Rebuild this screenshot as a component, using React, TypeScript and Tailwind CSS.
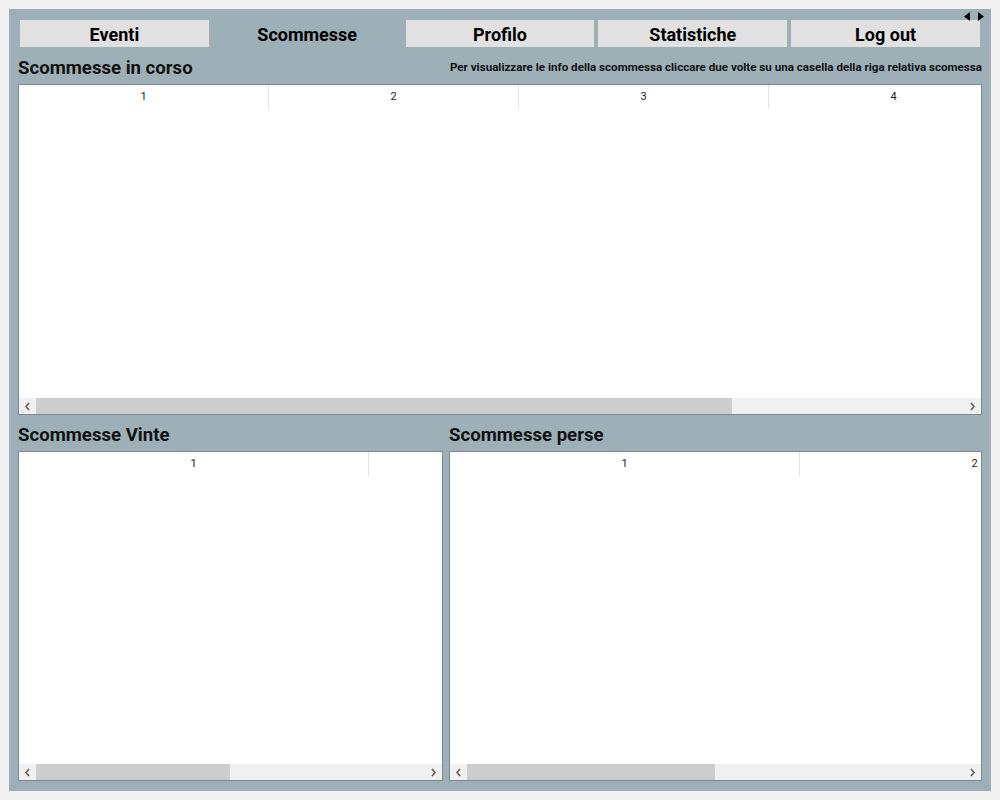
import React from 'react';

const font = { fontFamily: 'Roboto, "Liberation Sans", sans-serif' };

function Chevron({ dir }: { dir: 'left' | 'right' }) {
  return (
    <svg width="7" height="9" viewBox="0 0 7 9" className="text-[#606060]">
      {dir === 'left' ? (
        <path d="M5 1 L2 4.5 L5 8" fill="none" stroke="currentColor" strokeWidth="1.6" />
      ) : (
        <path d="M2 1 L5 4.5 L2 8" fill="none" stroke="currentColor" strokeWidth="1.6" />
      )}
    </svg>
  );
}

interface GridProps {
  columns: string[];
  wide?: boolean;
  thumb: number;
  className?: string;
}

function DataGrid({ columns, wide, thumb, className }: GridProps) {
  return (
    <div className={`flex flex-col bg-white border border-[#80888d] overflow-hidden min-w-0 ${className ?? ''}`}>
      {/* header */}
      <div className="flex h-[24px] shrink-0 overflow-hidden">
        {columns.map(c => (
          <div
            key={c}
            className={`${wide ? 'w-[350px]' : 'w-[250px]'} shrink-0 border-r border-[#e3e3e3] flex items-center justify-center pt-[1px] text-[11px] text-[#1a1a2e]`}
          >
            {c}
          </div>
        ))}
      </div>
      <div className="flex-1" />
      {/* horizontal scrollbar */}
      <div className="flex h-[16px] shrink-0 bg-[#f0f0f0] items-stretch">
        <div className="w-[17px] flex items-center justify-center">
          <Chevron dir="left" />
        </div>
        <div className="flex-1 flex items-stretch">
          <div className="bg-[#cdcdcd]" style={{ width: thumb }} />
        </div>
        <div className="w-[17px] flex items-center justify-center">
          <Chevron dir="right" />
        </div>
      </div>
    </div>
  );
}

function Tab({ label, active }: { label: string; active?: boolean }) {
  return (
    <div
      className={`h-[27px] flex items-center justify-center pt-[1px] text-[18px] font-bold text-black ${
        active ? '' : 'bg-[#e1e1e1]'
      }`}
    >
      {label}
    </div>
  );
}

export default function App() {
  return (
    <div className="w-[1000px] h-[800px] bg-[#f0f0f0] p-[9px]" style={font}>
      <div className="relative w-[982px] h-[782px] bg-[#9eb0b7] flex flex-col px-[9px] pt-[11px] pb-[10px]">
        {/* tab scroll arrows */}
        <div className="absolute right-[7px] top-[3px] flex gap-[8px]">
          <svg width="6" height="9" viewBox="0 0 6 9"><path d="M6 0 L0 4.5 L6 9 Z" fill="#000" /></svg>
          <svg width="6" height="9" viewBox="0 0 6 9"><path d="M0 0 L6 4.5 L0 9 Z" fill="#000" /></svg>
        </div>

        {/* tabs */}
        <div className="grid grid-cols-5 gap-[4px] px-[2px]">
          <Tab label="Eventi" />
          <Tab label="Scommesse" active />
          <Tab label="Profilo" />
          <Tab label="Statistiche" />
          <Tab label="Log out" />
        </div>

        {/* in corso */}
        <div className="mt-[9px] h-[22px] flex items-center justify-between pt-[2px]">
          <span className="text-[18.6px] font-bold text-[#111] leading-none">Scommesse in corso</span>
          <span className="text-[11.6px] font-bold text-[#111] whitespace-nowrap">
            Per visualizzare le info della scommessa cliccare due volte su una casella della riga relativa scomessa
          </span>
        </div>
        <DataGrid columns={['1', '2', '3', '4']} thumb={696} className="mt-[6px] h-[331px] shrink-0" />

        {/* vinte / perse */}
        <div className="flex gap-[6px] flex-1 min-h-0 mt-[8px]">
          <div className="w-[425px] shrink-0 flex flex-col min-w-0">
            <div className="h-[22px] flex items-center pt-[2px]">
              <span className="text-[18.6px] font-bold text-[#111] leading-none">Scommesse Vinte</span>
            </div>
            <DataGrid columns={['1', '2']} wide thumb={194} className="mt-[6px] flex-1" />
          </div>
          <div className="flex-1 flex flex-col min-w-0">
            <div className="h-[22px] flex items-center pt-[2px]">
              <span className="text-[18.6px] font-bold text-[#111] leading-none">Scommesse perse</span>
            </div>
            <DataGrid columns={['1', '2']} wide thumb={248} className="mt-[6px] flex-1" />
          </div>
        </div>
      </div>
    </div>
  );
}
